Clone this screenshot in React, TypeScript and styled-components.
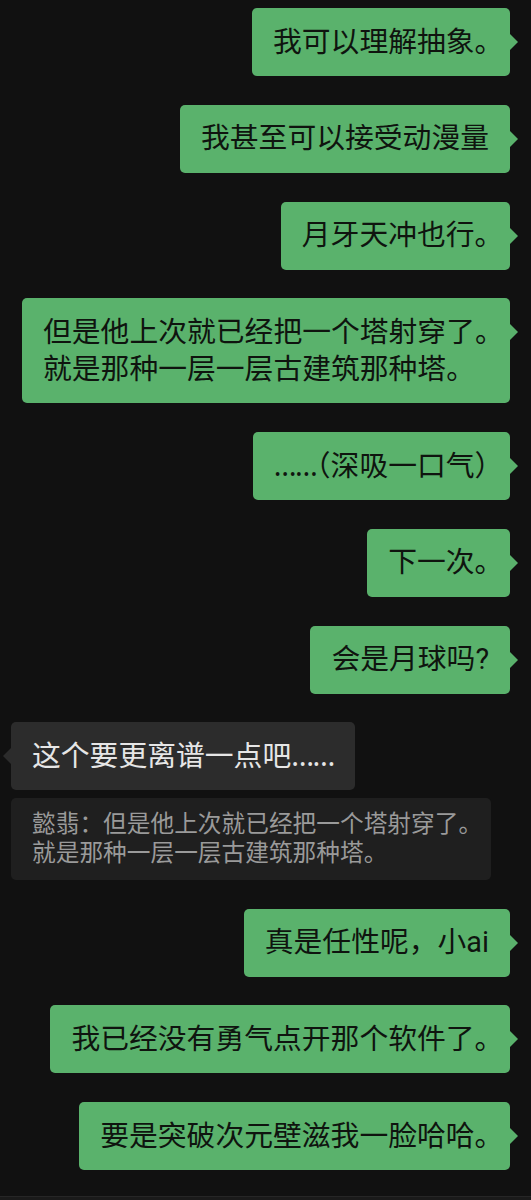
import styled, { createGlobalStyle } from 'styled-components'

type Side = 'me' | 'them'

interface Message {
  side: Side
  lines: string[]
  quote?: string[]
}

const GlobalStyle = createGlobalStyle`
  html, body {
    margin: 0;
    padding: 0;
    background: #111111;
  }
  * {
    box-sizing: border-box;
  }
`

const Screen = styled.main`
  display: flex;
  flex-direction: column;
  height: 100vh;
  background: #111111;
  font-family: Roboto, 'Noto Sans CJK SC', sans-serif;
  overflow: hidden;
`

const Thread = styled.div`
  flex: 1;
  display: flex;
  flex-direction: column;
  gap: 28.75px;
  padding-top: 8px;
`

const Row = styled.div<{ $side: Side }>`
  display: flex;
  flex-direction: column;
  align-items: ${({ $side }) => ($side === 'me' ? 'flex-end' : 'flex-start')};
  gap: 7.5px;
  padding: ${({ $side }) => ($side === 'me' ? '0 21px 0 0' : '0 0 0 11px')};
`

const Bubble = styled.div<{ $side: Side }>`
  position: relative;
  max-width: 488px;
  padding: 15.5px 21px;
  border-radius: 5px;
  font-size: 28.8px;
  line-height: 37px;
  white-space: nowrap;
  background: ${({ $side }) => ($side === 'me' ? '#5ab26c' : '#2c2c2c')};
  color: ${({ $side }) => ($side === 'me' ? '#0f140f' : '#e6e6e6')};

  &::after {
    content: '';
    position: absolute;
    top: 26px;
    border-top: 8px solid transparent;
    border-bottom: 8px solid transparent;
    ${({ $side }) =>
      $side === 'me'
        ? 'right: -8px; border-left: 8px solid #5ab26c;'
        : 'left: -8px; border-right: 8px solid #2c2c2c;'}
  }
`

const Quote = styled.div`
  max-width: 481px;
  padding: 12px 21px;
  border-radius: 5px;
  background: #1f1f1f;
  color: #9a9a9a;
  font-size: 23.7px;
  line-height: 29px;
  white-space: nowrap;
`

// half-width punctuation (line-end full stop, brackets), as the app sets it
const Half = styled.span`
  font-feature-settings: 'halt';
`

// evenly spaced ellipsis dots
const Dots = styled.span`
  font-family: 'Noto Sans', Roboto, sans-serif;
  line-height: 1;
  letter-spacing: -1.5px;
`

const InputBar = styled.footer`
  height: 4px;
  flex-shrink: 0;
  background: #1a1a1a;
  border-top: 1px solid #262626;
`

const MESSAGES: Message[] = [
  { side: 'me', lines: ['我可以理解抽象。'] },
  { side: 'me', lines: ['我甚至可以接受动漫量'] },
  { side: 'me', lines: ['月牙天冲也行。'] },
  {
    side: 'me',
    lines: ['但是他上次就已经把一个塔射穿了。', '就是那种一层一层古建筑那种塔。'],
  },
  { side: 'me', lines: ['……（深吸一口气）'] },
  { side: 'me', lines: ['下一次。'] },
  { side: 'me', lines: ['会是月球吗?'] },
  {
    side: 'them',
    lines: ['这个要更离谱一点吧……'],
    quote: ['懿翡：但是他上次就已经把一个塔射穿了。', '就是那种一层一层古建筑那种塔。'],
  },
  { side: 'me', lines: ['真是任性呢，小ai'] },
  { side: 'me', lines: ['我已经没有勇气点开那个软件了。'] },
  { side: 'me', lines: ['要是突破次元壁滋我一脸哈哈。'] },
]

function Line({ text }: { text: string }) {
  const parts = text.split(/(……|（|）|。$)/).filter(Boolean)
  return (
    <div>
      {parts.map((p, i) => {
        if (p === '……') return <Dots key={i}>{p}</Dots>
        if (p === '（' || p === '）' || p === '。') return <Half key={i}>{p}</Half>
        return <span key={i}>{p}</span>
      })}
    </div>
  )
}

export default function App() {
  return (
    <Screen>
      <GlobalStyle />
      <Thread>
        {MESSAGES.map((m, i) => (
          <Row key={i} $side={m.side}>
            <Bubble $side={m.side}>
              {m.lines.map((l, j) => (
                <Line key={j} text={l} />
              ))}
            </Bubble>
            {m.quote && (
              <Quote>
                {m.quote.map((l, j) => (
                  <Line key={j} text={l} />
                ))}
              </Quote>
            )}
          </Row>
        ))}
      </Thread>
      <InputBar />
    </Screen>
  )
}
